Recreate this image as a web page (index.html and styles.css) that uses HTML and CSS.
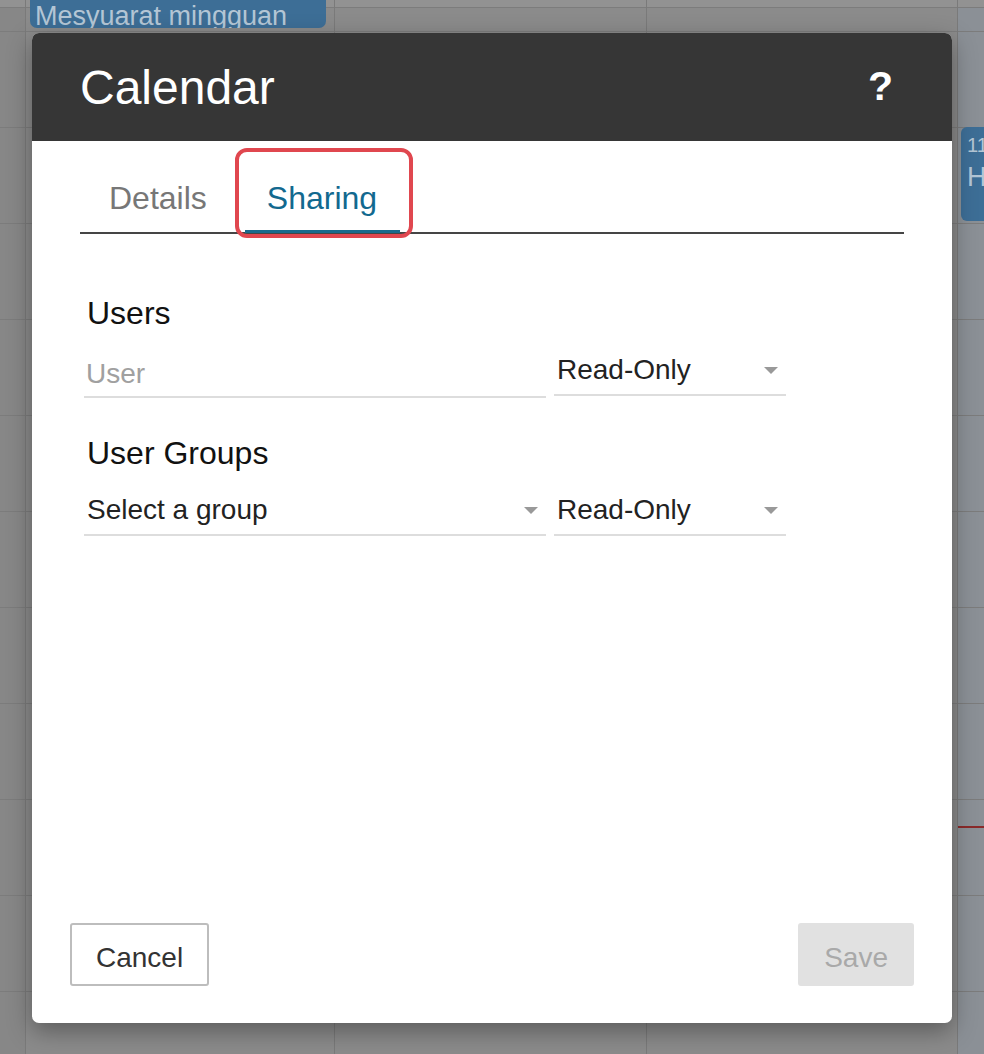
FILE: index.html
```html
<!DOCTYPE html>
<html lang="en">
<head>
<meta charset="utf-8">
<title>Calendar – Sharing</title>
<link rel="stylesheet" href="styles.css">
</head>
<body>
<div class="calendar">
  <div class="col gutter">
    <div class="cell strip"></div><div class="cell head"></div>
    <div class="cell"></div><div class="cell"></div><div class="cell"></div><div class="cell"></div><div class="cell"></div><div class="cell"></div><div class="cell"></div><div class="cell"></div><div class="cell"></div><div class="cell"></div><div class="cell"></div>
  </div>
  <div class="col day day1">
    <div class="cell strip"></div><div class="cell head"></div>
    <div class="cell"></div><div class="cell"></div><div class="cell"></div><div class="cell"></div><div class="cell"></div><div class="cell"></div><div class="cell"></div><div class="cell"></div><div class="cell"></div><div class="cell"></div><div class="cell"></div>
    <div class="event event-top">Mesyuarat mingguan</div>
  </div>
  <div class="col day day2">
    <div class="cell strip"></div><div class="cell head"></div>
    <div class="cell"></div><div class="cell"></div><div class="cell"></div><div class="cell"></div><div class="cell"></div><div class="cell"></div><div class="cell"></div><div class="cell"></div><div class="cell"></div><div class="cell"></div><div class="cell"></div>
  </div>
  <div class="col day day3">
    <div class="cell strip"></div><div class="cell head"></div>
    <div class="cell"></div><div class="cell"></div><div class="cell"></div><div class="cell"></div><div class="cell"></div><div class="cell"></div><div class="cell"></div><div class="cell"></div><div class="cell"></div><div class="cell"></div><div class="cell"></div>
  </div>
  <div class="col day today">
    <div class="cell strip"></div><div class="cell head"></div>
    <div class="cell"></div><div class="cell"></div><div class="cell"></div><div class="cell"></div><div class="cell"></div><div class="cell"></div><div class="cell"></div><div class="cell"></div><div class="cell"></div><div class="cell"></div><div class="cell"></div>
    <div class="event event-side"><span class="event-time">11</span><span class="event-name">H</span></div>
    <div class="now-line"></div>
  </div>
</div>

<div class="modal" role="dialog" aria-labelledby="modal-title">
  <header class="modal-header">
    <h1 class="modal-title" id="modal-title">Calendar</h1>
    <span class="help">?</span>
  </header>
  <nav class="tabs">
    <div class="tab">Details</div>
    <div class="tab active">Sharing</div>
  </nav>
  <div class="modal-body">
    <div class="section-label">Users</div>
    <div class="field-row">
      <input class="text-input" type="text" placeholder="User">
      <div class="select"><span>Read-Only</span><span class="caret"></span></div>
    </div>
    <div class="section-label second">User Groups</div>
    <div class="field-row">
      <div class="select wide"><span>Select a group</span><span class="caret"></span></div>
      <div class="select"><span>Read-Only</span><span class="caret"></span></div>
    </div>
  </div>
  <footer class="modal-footer">
    <button class="btn" type="button">Cancel</button>
    <button class="btn btn-disabled" type="button" disabled>Save</button>
  </footer>
</div>
</body>
</html>
```

FILE: styles.css
```css
html, body {
  margin: 0;
  padding: 0;
  height: 1054px;
  overflow: hidden;
}

body {
  font-family: "Liberation Sans", Arial, sans-serif;
  background: #8a8a8a;
  position: relative;
}

/* ---------- calendar behind the dialog (dimmed) ---------- */
.calendar {
  display: flex;
  height: 1054px;
  overflow: hidden;
  background: #8b8b8b;
}

.col {
  flex: none;
  display: flex;
  flex-direction: column;
  border-right: 1px solid #7a7a7a;
  position: relative;
}

.gutter {
  width: 25px;
  background: #878787;
}

.day1 { width: 308px; }
.day2 { width: 311px; }
.day3 { width: 310px; }
.today {
  flex: 1;
  border-right: none;
  background: #8b9096;
}

.cell {
  flex: none;
  height: 95px;
  border-bottom: 1px solid #7c7c7c;
}

.cell.strip {
  height: 7px;
  background: #929292;
}

.cell.head {
  height: 23px;
}

.event {
  position: absolute;
  background: #3d6e96;
  color: #b4c6d5;
  border-radius: 6px;
  box-sizing: border-box;
}

.event-top {
  left: 4px;
  width: 296px;
  top: -20px;
  height: 48px;
  padding: 15px 0 0 5px;
  font-size: 27px;
  line-height: 42px;
  white-space: nowrap;
  overflow: hidden;
  border-radius: 0 0 7px 7px;
}

.event-side {
  left: 3px;
  top: 127px;
  width: 60px;
  height: 94px;
  padding: 6px 0 0 6px;
  display: flex;
  flex-direction: column;
}

.event-time {
  font-size: 20px;
  line-height: 24px;
}

.event-name {
  font-size: 27px;
  line-height: 31px;
  margin-top: 5px;
}

.now-line {
  position: absolute;
  left: 0;
  right: 0;
  top: 826px;
  height: 2px;
  background: #8a2a2a;
}

/* ---------- dialog ---------- */
.modal {
  position: absolute;
  left: 32px;
  top: 33px;
  width: 920px;
  height: 990px;
  background: #ffffff;
  border-radius: 7px;
  box-shadow: 0 8px 24px rgba(0, 0, 0, 0.35);
  display: flex;
  flex-direction: column;
}

.modal-header {
  flex: none;
  height: 108px;
  background: #363636;
  border-radius: 7px 7px 0 0;
  display: flex;
  align-items: center;
  justify-content: space-between;
  padding: 0 59px 0 48px;
}

.modal-title {
  margin: 0;
  font-size: 48px;
  font-weight: normal;
  color: #ffffff;
}

.help {
  font-size: 41px;
  font-weight: bold;
  color: #ffffff;
  margin-top: -2px;
}

.tabs {
  flex: none;
  display: flex;
  margin: 0 48px;
  border-bottom: 2px solid #454545;
}

.tab {
  position: relative;
  padding: 39px 29px 15px;
  font-size: 32px;
  line-height: 37px;
  color: #777777;
}

.tab.active {
  color: #12698f;
  padding-left: 31px;
}

.tab.active::before {
  content: "";
  position: absolute;
  left: 9px;
  right: 6px;
  bottom: -1px;
  height: 3px;
  background: #1a6a8c;
  z-index: 1;
}

.tab.active::after {
  content: "";
  position: absolute;
  left: -1px;
  right: -7px;
  top: 7px;
  bottom: -6px;
  border: 4px solid #e0474f;
  border-radius: 12px;
  box-sizing: border-box;
  z-index: 2;
}

.modal-body {
  flex: 1;
  padding: 61px 52px 0;
}

.section-label {
  font-size: 32px;
  line-height: 36px;
  color: #111111;
  padding-left: 3px;
}

.section-label.second {
  margin-top: 37px;
}

.field-row {
  display: flex;
  align-items: flex-start;
  gap: 8px;
  margin-top: 23px;
}

.text-input {
  display: block;
  width: 460px;
  height: 32px;
  box-sizing: content-box;
  padding: 4px 0 6px 2px;
  margin: 0;
  border: none;
  border-bottom: 2px solid #dddddd;
  outline: none;
  background: transparent;
  font-family: "Liberation Sans", Arial, sans-serif;
  font-size: 28px;
  color: #222222;
}

.text-input::placeholder {
  color: #a0a0a0;
}

.select {
  width: 221px;
  display: flex;
  align-items: center;
  justify-content: space-between;
  padding: 0 8px 8px 3px;
  border-bottom: 2px solid #dddddd;
  font-size: 28px;
  line-height: 32px;
  color: #222222;
}

.select.wide {
  width: 451px;
}

.caret {
  width: 0;
  height: 0;
  border-left: 7px solid transparent;
  border-right: 7px solid transparent;
  border-top: 7px solid #999999;
}

.modal-footer {
  flex: none;
  display: flex;
  justify-content: space-between;
  padding: 0 38px 37px;
}

.btn {
  height: 63px;
  box-sizing: border-box;
  padding: 7px 24px 0;
  line-height: 52px;
  font-family: "Liberation Sans", Arial, sans-serif;
  font-size: 28px;
  color: #333333;
  background: #ffffff;
  border: 2px solid #bdbdbd;
  border-radius: 3px;
}

.btn-disabled {
  background: #e1e1e1;
  border-color: #e1e1e1;
  color: #a9a9a9;
}
```
